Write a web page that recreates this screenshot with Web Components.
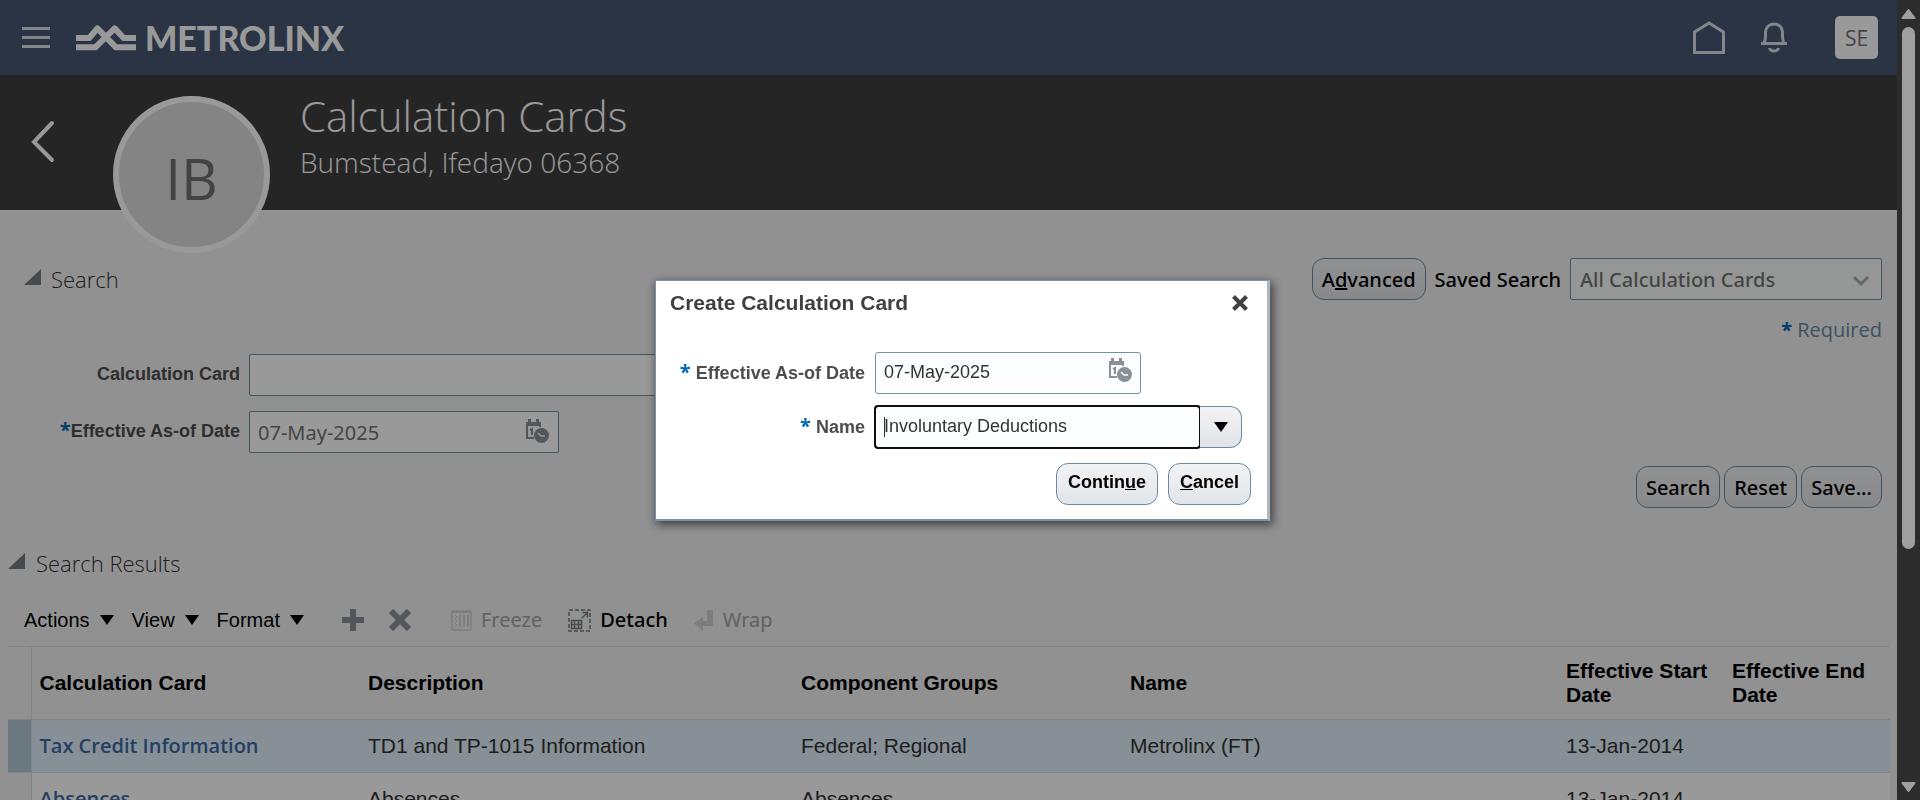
<!DOCTYPE html>
<html lang="en">
<head>
<meta charset="utf-8">
<meta name="viewport" content="width=device-width, initial-scale=1">
<title>Calculation Cards</title>
<style>
  html, body { margin: 0; height: 100%; overflow: hidden; }
  body {
    --ui: "Open Sans", "Noto Sans", sans-serif;
    --ui-strong: "Noto Sans", "Open Sans", sans-serif;
    --text: "Liberation Sans", Arial, sans-serif;
    --line: #7592a4;
    --star: #0068b5;
    font-family: var(--text);
    font-size: 18px;
    color: #333;
    background: #f2f2f2;
  }
</style>
</head>
<body>
<mx-app></mx-app>
<script>
const define = (name, html) => {
  const template = document.createElement('template');
  template.innerHTML = '<style>*,*::before{box-sizing:border-box}</style>' + html;
  customElements.define(name, class extends HTMLElement {
    constructor() {
      super();
      this.attachShadow({ mode: 'open' }).append(template.content.cloneNode(true));
    }
  });
};

const calendar = `<svg width="24" height="25" viewBox="0 0 24 25" aria-hidden="true">
  <path d="M2 4v15h7M15 4v4" fill="none" stroke="#8a9196" stroke-width="2"/>
  <path d="M1 3h15v4H1zM3 0h3v4H3zM11 0h3v4h-3z" fill="#8a9196"/>
  <path d="M5 11l2-1v6" fill="none" stroke="#8a9196" stroke-width="2"/>
  <circle cx="16.5" cy="16.5" r="7.5" fill="#8a9196"/>
  <path d="M13 14l3 3h4" fill="none" stroke="#fff" stroke-width="1.5"/></svg>`;

define('mx-button', `<style>
  :host { display: block; flex: none; }
  button { height: 42px; padding: 0 9px; border: 1px solid #6f8aa3; border-radius: 12px; font: 500 20px var(--ui-strong); color: #000;
    background: linear-gradient(#f1f2f3, #e2e5e8); white-space: nowrap; display: block; }
  :host([bold]) button { font: bold 18px var(--text); padding: 0 11px 2px; }
</style><button type="button"><slot></slot></button>`);

define('mx-header', `<style>
  :host { display: flex; align-items: center; height: 75px; padding: 0 19px 0 22px; background: #465873; color: #dce1e6; }
  button, a { border: 0; background: none; padding: 0; display: block; color: inherit; text-decoration: none; }
  svg { display: block; }
  .brand { display: flex; align-items: center; gap: 9px; margin-left: 26px; flex: 1; color: #fff; font: 900 34px/34px Lato, sans-serif; }
  .home { margin-right: 36px; }
  .user { margin-left: 48px; width: 43px; height: 43px; border-radius: 5px; background: #fff; color: #747474; font: 21px var(--ui); }
</style>
<button type="button" aria-label="Navigator"><svg width="28" height="22" fill="none" stroke="currentColor" stroke-width="3"><path d="M0 1.5h28M0 10.5h28M0 19.5h28"/></svg></button>
<a class="brand" href="#"><svg width="60" height="26" viewBox="228 43 180 78" fill="none" stroke="#fff" stroke-width="18" stroke-linejoin="round" aria-hidden="true"><path d="M228 82h40l24-29 56 57h60M228 110h58l58-57 27 29h37"/></svg><span>METROLINX</span></a>
<a class="home" href="#" aria-label="Home"><svg width="32" height="33" fill="none" stroke="currentColor" stroke-width="3"><path d="M1.500 11 16 2 30.500 11v20.500h-29z"/></svg></a>
<button type="button" aria-label="Notifications"><svg width="26" height="31" viewBox="0 0 26 31" fill="none" stroke="currentColor" stroke-width="3"><path d="M0 21.500h26"/><path d="M3 21C5 18 4.500 15 4.500 11c0-6 4-9 8.500-9s8.500 3 8.500 9c0 4-.5 7 1.500 10"/><path d="M8.500 26c1 4 8 4 9 0"/></svg></button>
<button class="user" type="button">SE</button>`);

define('mx-banner', `<style>
  :host { display: grid; grid-template-columns: 113px 157px 1fr; height: 135px; background: #3f3f3f; color: #fff; }
  a { align-self: start; margin: 45px 0 0 31px; }
  svg { display: block; }
  .avatar { width: 157px; height: 157px; margin-top: 21px; border: 6px solid #fff; border-radius: 50%; background: #dcdcdc; color: #707070;
    display: grid; place-items: center; font: 57px/60px var(--ui); padding-top: 6px; }
  .titles { padding: 10px 0 0 30px; }
  h1 { margin: 0; font: 300 42px/62px var(--ui); }
  p { margin: 0; font: 300 28px/30px var(--ui); }
</style>
<a href="#" aria-label="Back"><svg width="24" height="44" fill="none" stroke="#fff" stroke-width="4" stroke-linecap="round"><path d="M21 3 3 22l18 18"/></svg></a>
<div class="avatar">IB</div>
<div class="titles"><h1>Calculation Cards</h1><p>Bumstead, Ifedayo 06368</p></div>`);

define('mx-heading', `<style>
  :host { display: flex; align-items: center; gap: 10px; height: 42px; }
  svg { display: block; margin-bottom: 4px; }
  h2 { margin: 0; font: 300 22px/32px var(--ui); color: #333; }
</style><svg width="17" height="16" fill="#767c82" aria-hidden="true"><path d="M0 16 17 0v16z"/></svg><h2><slot></slot></h2>`);

define('mx-search', `<style>
  :host { display: block; padding: 48px 15px 0 24px; }
  .top, .actions { display: flex; align-items: center; gap: 9px; }
  mx-heading { flex: 1; }
  label.saved { font: 500 20px var(--ui-strong); color: #000; padding: 0; }
  .pick { position: relative; width: 312px; }
  select { appearance: none; width: 100%; height: 42px; padding: 0 9px; border: 1px solid var(--line); border-radius: 2px; background: #f7fcfa; font: 500 20px var(--ui-strong); color: #747474; display: block; }
  .pick svg { position: absolute; right: 13px; top: 17px; }
  .required { margin: 12px 0 0; text-align: right; font: 20px/36px var(--ui); color: #678aa0; }
  .star { color: var(--star); font: bold 20px/20px var(--ui); }
  .form { display: grid; grid-template-columns: 216px auto; justify-content: start; gap: 15px 9px; margin-top: 6px; }
  label { text-align: right; align-self: center; font: bold 18px/24px var(--text); color: #4d4d4d; white-space: nowrap; padding-bottom: 2px; }
  .form select { width: 424px; background: #fff; }
  .date { position: relative; width: 310px; }
  input { width: 100%; height: 42px; padding: 0 8px; border: 1px solid var(--line); border-radius: 2px; background: #fff; font: 20px var(--ui-strong); color: #747474; display: block; }
  .date svg { position: absolute; right: 10px; top: 8px; }
  .actions { justify-content: flex-end; gap: 4px; margin-top: 13px; }
</style>
<div class="top"><mx-heading>Search</mx-heading><mx-button>A<u>d</u>vanced</mx-button><label class="saved" for="saved">Saved Search</label>
<div class="pick"><select id="saved"><option>All Calculation Cards</option></select><svg width="16" height="12" fill="none" stroke="#a5a9ad" stroke-width="3"><path d="M1 2l7 7 7-7"/></svg></div></div>
<p class="required"><span class="star">*</span> Required</p>
<div class="form">
  <label for="card">Calculation Card</label><select id="card"><option></option></select>
  <label for="date"><span class="star">*</span>Effective As-of Date</label><div class="date"><input id="date" value="07-May-2025">${calendar}</div>
</div>
<div class="actions"><mx-button>Search</mx-button><mx-button>Reset</mx-button><mx-button>Save...</mx-button></div>`);

define('mx-toolbar', `<style>
  :host { display: flex; align-items: center; height: 42px; padding-left: 16px; color: #000; }
  button { display: flex; align-items: center; padding: 0; border: 0; background: none; color: inherit; white-space: nowrap; }
  .menu { font: 20px/24px var(--text); gap: 10px; margin-right: 18px; }
  .tool { font: 500 20px/28px var(--ui-strong); gap: 9px; }
  .tool:disabled { color: #a0a3a5; font-weight: 400; }
  .add { margin: 0 25px 0 20px; }
  .delete { margin-right: 40px; }
  .freeze, .detach { margin-right: 26px; }
  svg { display: block; flex: none; }
</style>
<button class="menu" type="button">Actions <svg width="14" height="10"><path d="M0 0h14L7 10z"/></svg></button>
<button class="menu" type="button">View <svg width="14" height="10"><path d="M0 0h14L7 10z"/></svg></button>
<button class="menu" type="button">Format <svg width="14" height="10"><path d="M0 0h14L7 10z"/></svg></button>
<button class="add" type="button" aria-label="Add"><svg width="22" height="22" fill="#8a9299"><path d="M8 0h6v8h8v6h-8v8H8v-8H0V8h8z"/></svg></button>
<button class="delete" type="button" aria-label="Delete"><svg width="22" height="22" stroke="#8a9299" stroke-width="6"><path d="M2 2l18 18M20 2 2 20"/></svg></button>
<button class="tool freeze" type="button" disabled><svg width="21" height="21" fill="none" stroke="#cdd0d2"><path d="M1 1h19v19H1z" stroke="#d0d3d5" stroke-width="1.500"/><path d="M1 2h19" stroke-width="2"/><path d="M9 5v12M13 5v12M17 5v12" stroke="#d0d3d5" stroke-width="2"/><path d="M4 5l2 2-2 2 2 2-2 2 2 2-2 2"/></svg>Freeze</button>
<button class="tool detach" type="button"><svg width="23" height="23" fill="none" stroke="#777c80"><path d="M1 1h21v21H1z" stroke-width="1.500" stroke-dasharray="4 2"/><path d="M3.500 11.500h10v8h-10zM3.500 15.500h10M6.500 11v9M10.500 11v9" stroke-width="1.500"/><path d="M14 9l5-5M14.500 3.500h5v5" stroke-width="1.500"/></svg>Detach</button>
<button class="tool" type="button" disabled><svg width="20" height="21" fill="#cfd1d3"><path d="M13 0h6v16H9v5L0 13.500 9 7v4h4z"/></svg>Wrap</button>`);

define('mx-results', `<style>
  :host { display: block; padding: 34px 7px 0 8px; }
  mx-heading { gap: 11px; }
  mx-toolbar { margin-top: 15px; margin-bottom: 5px; }
  table { width: 100%; border-collapse: collapse; table-layout: fixed; font: 21px/24px var(--text); color: #333; }
  .mark { width: 23px; padding: 0; background: #f2f2f2; }
  .start { width: 166px; }
  th, td { text-align: left; padding: 0 8px; border: 0 solid #d3dde4; border-bottom-width: 1px; }
  th { height: 73px; color: #000; font-weight: bold; border-top-width: 1px; border-top-color: #cfdfec; }
  .mark { border-right-width: 1px; border-right-color: #d8dcdf; }
  td { height: 53px; background: #fff; padding-bottom: 1px; }
  .selected td { background: #e2f1fb; }
  .selected td.mark { background: #b2c8d4; }
  a { color: #3b6ca6; font: 600 20px/24px var(--ui); text-decoration: none; }
</style>
<mx-heading>Search Results</mx-heading>
<mx-toolbar></mx-toolbar>
<table>
  <colgroup><col class="mark"><col style="width:329px"><col style="width:433px"><col style="width:329px"><col><col class="start"><col class="start"></colgroup>
  <thead><tr><th class="mark"></th><th>Calculation Card</th><th>Description</th><th>Component Groups</th><th>Name</th><th>Effective Start Date</th><th>Effective End Date</th></tr></thead>
  <tbody>
    <tr class="selected"><td class="mark"></td><td><a href="#">Tax Credit Information</a></td><td>TD1 and TP-1015 Information</td><td>Federal; Regional</td><td>Metrolinx (FT)</td><td>13-Jan-2014</td><td></td></tr>
    <tr><td class="mark"></td><td><a href="#">Absences</a></td><td>Absences</td><td>Absences</td><td></td><td>13-Jan-2014</td><td></td></tr>
  </tbody>
</table>`);

define('mx-dialog', `<style>
  :host { position: fixed; inset: 0; padding-left: 5px; display: grid; place-items: center; background: rgba(0, 0, 0, .4); }
  section { width: 615px; padding: 8px 16px 14px 14px; background: #fff; border: 2px solid #7592ab; border-width: 1px 3px 2px 1px; border-right-color: #a9b9c4; box-shadow: 2px 3px 9px 1px rgba(0, 0, 0, .55); }
  header { display: flex; justify-content: space-between; height: 28px; align-items: center; }
  h2 { margin: 0; font: bold 21px/28px var(--text); color: #404040; }
  header button { border: 0; background: none; padding: 0 3px; }
  svg { display: block; }
  .form { display: grid; grid-template-columns: 195px auto; justify-content: start; gap: 12px 10px; margin-top: 35px; }
  label { text-align: right; align-self: center; font: bold 18px/24px var(--text); color: #4d4d4d; white-space: nowrap; }
  .star { color: var(--star); font: bold 20px/20px var(--ui); }
  .date { position: relative; width: 266px; }
  .date svg { position: absolute; right: 9px; top: 6px; }
  input { width: 100%; height: 42px; padding: 0 8px; border: 1px solid var(--line); border-radius: 3px; background: #fbfdff; font: 18px var(--text); color: #333; display: block; }
  .combo { display: flex; width: 367px; }
  .combo input { flex: 1; min-width: 0; outline: 2px solid #101010; border-color: #101010; outline-offset: -1px;
    background: linear-gradient(#333, #333) 8px 50% / 1px 20px no-repeat #fbfdff; }
  .combo button { width: 42px; height: 42px; padding: 0; display: grid; place-items: center; border: 1px solid #6f8aa3; border-left: 0; border-radius: 0 12px 12px 0; background: linear-gradient(#f1f2f3, #e2e5e8); }
  footer { display: flex; justify-content: flex-end; gap: 10px; margin-top: 15px; }
</style>
<section role="dialog" aria-labelledby="title">
  <header><h2 id="title">Create Calculation Card</h2><button type="button" aria-label="Close"><svg width="16" height="16" stroke="#404040" stroke-width="4"><path d="M1.500 1.500l13 13M14.500 1.500l-13 13"/></svg></button></header>
  <div class="form">
    <label for="date"><span class="star">*</span> Effective As-of Date</label><div class="date"><input id="date" value="07-May-2025">${calendar}</div>
    <label for="name"><span class="star">*</span> Name</label><div class="combo"><input id="name" value="Involuntary Deductions"><button type="button" aria-label="Show list"><svg width="14" height="10"><path d="M0 0h14L7 10z"/></svg></button></div>
  </div>
  <footer><mx-button bold>Contin<u>u</u>e</mx-button><mx-button bold><u>C</u>ancel</mx-button></footer>
</section>`);

define('mx-scrollbar', `<style>
  :host { position: relative; z-index: 1; display: grid; grid-template-rows: 27px 1fr 27px; justify-items: center; align-items: center; background: #2c2c2c; }
  svg { display: block; }
  .thumb { width: 13px; height: 70%; align-self: start; border-radius: 7px; background: #9f9f9f; }
</style>
<svg width="15" height="12" fill="#9f9f9f" stroke="#9f9f9f" stroke-width="2" stroke-linejoin="round"><path d="M7.500 2l6 8h-12z"/></svg>
<div class="thumb"></div>
<svg width="15" height="12" fill="#9f9f9f" stroke="#9f9f9f" stroke-width="2" stroke-linejoin="round"><path d="M1.500 2h12l-6 8z"/></svg>`);

define('mx-app', `<style>
  :host { display: grid; grid-template-columns: minmax(0, 1fr) 23px; grid-template-rows: 100vh; overflow: hidden; }
  main { overflow: hidden; }
</style>
<main><mx-header></mx-header><mx-banner></mx-banner><mx-search></mx-search><mx-results></mx-results></main>
<mx-scrollbar></mx-scrollbar>
<mx-dialog></mx-dialog>`);
</script>
</body>
</html>
